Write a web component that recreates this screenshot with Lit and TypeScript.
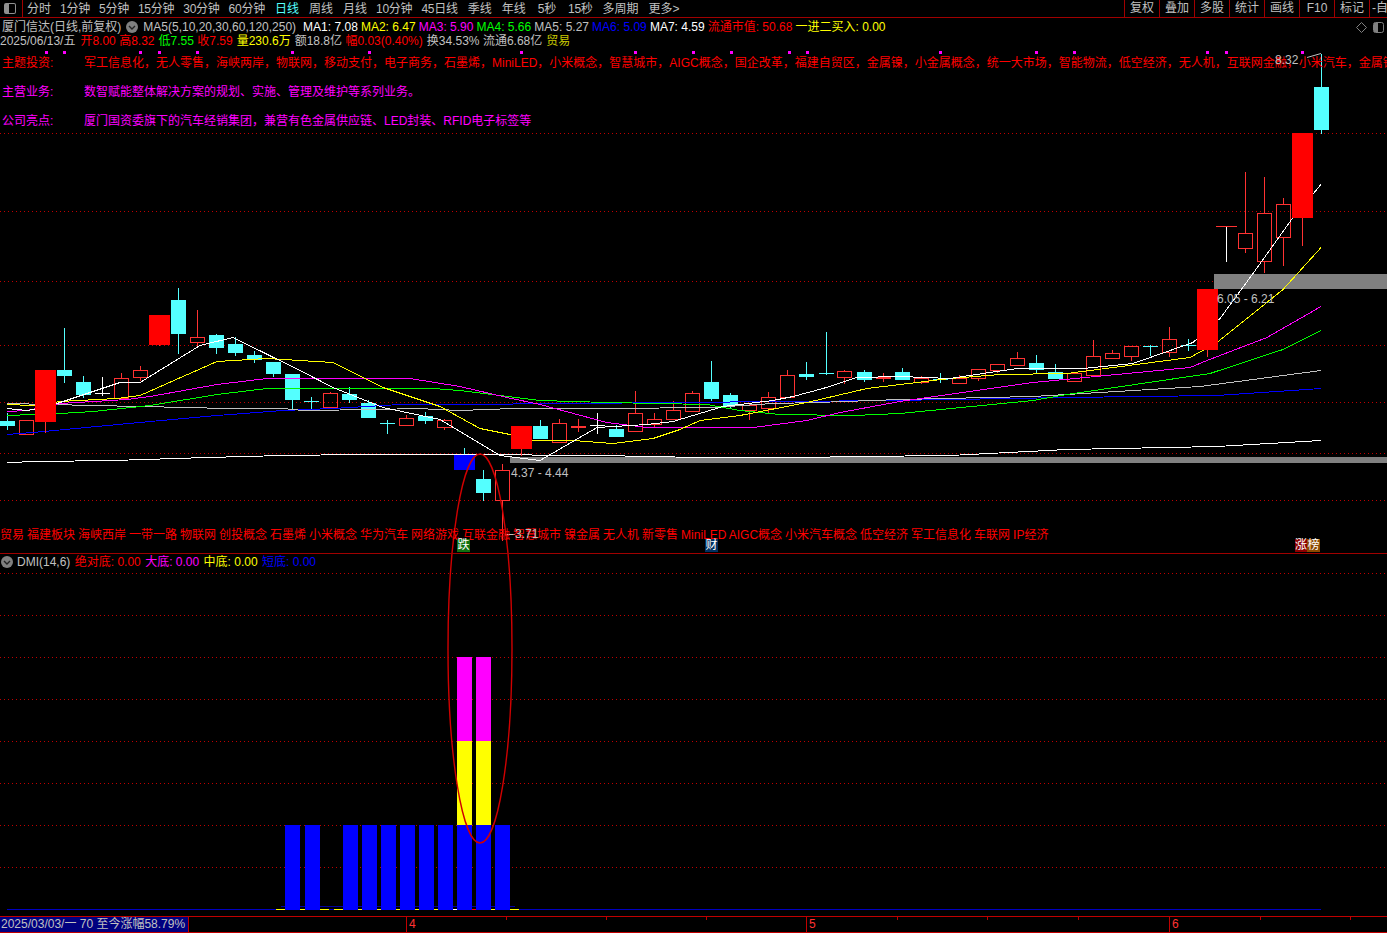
import { LitElement, html, css, svg } from 'lit';
import { customElement } from 'lit/decorators.js';

type Candle = [x: number, kind: 'up' | 'down' | 'fill' | 'blue' | 'doji', top: number, bottom: number, wickTop: number, wickBottom: number, color?: string, wickColor?: string];

const RED = '#ff3232';
const CYAN = '#54ffff';
const COMMA = '\uFF0C';

// x, kind, body top, body bottom, wick top, wick bottom
const CANDLES: Candle[] = [
  [7, 'down', 421, 426, 413, 430],
  [26, 'up', 420, 434, 420, 434],
  [45, 'fill', 370, 422, 370, 433],
  [64, 'down', 370, 376, 328, 383],
  [83, 'down', 382, 395, 376, 398],
  [102, 'doji', 393, 393, 377, 396, '#ffffff'],
  [121, 'up', 378, 398, 373, 398],
  [140, 'up', 370, 377, 366, 381],
  [159, 'fill', 315, 345, 315, 346],
  [178, 'down', 300, 334, 288, 354],
  [197, 'up', 337, 342, 310, 346],
  [216, 'down', 335, 348, 334, 354],
  [235, 'down', 344, 353, 337, 356],
  [254, 'down', 355, 360, 351, 363],
  [273, 'down', 362, 374, 362, 377],
  [292, 'down', 374, 400, 374, 410],
  [311, 'doji', 401, 401, 397, 411, CYAN],
  [330, 'up', 393, 407, 392, 409],
  [349, 'down', 394, 400, 387, 403],
  [368, 'down', 403, 418, 400, 418],
  [387, 'doji', 423, 423, 420, 434, CYAN],
  [406, 'up', 418, 425, 415, 425],
  [425, 'down', 416, 421, 412, 424],
  [444, 'up', 420, 427, 419, 430],
  [464, 'blue', 454, 470, 448, 470],
  [483, 'down', 479, 493, 470, 501],
  [502, 'up', 470, 500, 464, 541],
  [521, 'fill', 426, 449, 426, 456],
  [540, 'down', 426, 439, 420, 439],
  [559, 'up', 423, 442, 419, 442],
  [578, 'doji', 426, 426, 419, 432, RED],
  [597, 'doji', 425, 425, 413, 434, '#ffffff'],
  [616, 'down', 429, 437, 425, 437],
  [635, 'up', 413, 431, 391, 431],
  [654, 'up', 419, 424, 413, 427],
  [673, 'up', 410, 419, 401, 419],
  [692, 'up', 393, 411, 391, 411],
  [711, 'down', 382, 399, 361, 401],
  [730, 'down', 395, 406, 393, 409],
  [749, 'up', 405, 410, 403, 420],
  [768, 'up', 397, 408, 392, 413],
  [787, 'up', 375, 397, 370, 397],
  [806, 'down', 374, 377, 362, 380],
  [826, 'doji', 373, 373, 332, 375, CYAN],
  [844, 'up', 371, 377, 370, 384],
  [864, 'down', 372, 380, 370, 382],
  [883, 'doji', 377, 377, 373, 382, RED],
  [902, 'down', 372, 380, 368, 380],
  [921, 'up', 378, 382, 376, 384],
  [940, 'doji', 379, 379, 373, 383, CYAN],
  [959, 'up', 378, 383, 375, 383],
  [978, 'up', 369, 378, 369, 381],
  [997, 'up', 364, 370, 364, 373],
  [1017, 'up', 358, 365, 352, 365],
  [1036, 'down', 363, 370, 355, 373],
  [1055, 'down', 372, 379, 364, 379],
  [1074, 'up', 373, 381, 373, 381],
  [1093, 'up', 356, 375, 340, 375],
  [1112, 'up', 353, 358, 350, 358],
  [1131, 'up', 346, 356, 346, 361],
  [1150, 'doji', 346, 346, 345, 356, CYAN],
  [1169, 'up', 339, 352, 327, 357],
  [1188, 'doji', 345, 345, 339, 351, CYAN],
  [1207, 'fill', 289, 350, 289, 357],
  [1226, 'doji', 226, 226, 226, 262, RED, '#ffffff'],
  [1245, 'up', 233, 248, 172, 253],
  [1264, 'up', 213, 261, 177, 273],
  [1283, 'up', 204, 237, 198, 266],
  [1302, 'fill', 133, 218, 133, 246],
  [1321, 'down', 87, 130, 54, 134],
];

const MA_LINES: { color: string; points: number[][] }[] = [
  { color: '#ffffff', points: [[7, 462], [37, 461], [113, 460], [207, 457], [283, 455], [360, 454], [460, 454], [600, 455], [700, 457], [800, 457], [860, 456], [950, 455], [1067, 449], [1217, 446], [1321, 440]] },
  { color: '#0000ff', points: [[7, 434], [33, 432], [150, 421], [217, 415], [283, 410], [333, 408], [400, 404], [460, 404], [893, 400], [1067, 397], [1217, 395], [1321, 388]] },
  { color: '#c0c0c0', points: [[7, 403], [93, 405], [187, 407], [227, 408], [283, 408], [303, 410], [377, 409], [417, 408], [460, 410], [513, 408], [607, 408], [713, 407], [773, 403], [817, 402], [900, 399], [1033, 396], [1200, 386], [1321, 370]] },
  { color: '#00ff00', points: [[7, 415], [60, 413], [93, 411], [150, 405], [217, 394], [267, 388], [433, 388], [460, 390], [540, 400], [607, 402], [707, 404], [740, 410], [780, 414], [853, 415], [900, 413], [1033, 400], [1067, 394], [1210, 373], [1283, 349], [1321, 330]] },
  { color: '#ff00ff', points: [[7, 411], [27, 410], [60, 403], [127, 399], [150, 396], [217, 384], [267, 378], [410, 378], [460, 386], [507, 397], [540, 404], [607, 422], [647, 427], [753, 427], [807, 420], [840, 412], [900, 401], [1033, 382], [1190, 367], [1207, 360], [1267, 337], [1321, 306]] },
  { color: '#ffff00', points: [[7, 404], [33, 405], [60, 401], [117, 398], [140, 395], [217, 361], [267, 358], [333, 362], [383, 387], [440, 406], [480, 428], [510, 434], [533, 440], [573, 440], [613, 443], [653, 438], [680, 429], [700, 420], [740, 415], [807, 402], [867, 388], [950, 378], [1000, 374], [1067, 373], [1190, 357], [1217, 342], [1283, 289], [1321, 247]] },
  { color: '#ffffff', points: [[7, 408], [27, 410], [33, 409], [57, 403], [120, 382], [140, 382], [200, 345], [233, 337], [300, 370], [333, 387], [383, 407], [440, 419], [480, 443], [500, 455], [540, 460], [597, 427], [647, 424], [673, 421], [723, 406], [773, 400], [793, 396], [823, 388], [857, 377], [900, 376], [950, 378], [983, 373], [1017, 368], [1083, 368], [1133, 363], [1193, 342], [1220, 318], [1253, 273], [1293, 217], [1321, 184]] },
];

const MAIN_GRID = [133, 211, 281, 345, 402, 453, 500];
const SUB_GRID = [573, 615, 657, 699, 741, 783, 825, 867];
const BLUE_BARS = [285, 305, 343, 362, 381, 400, 419, 438, 457, 476, 495];
// little stubs in the gaps between the blue bars
const STUBS: [number, number, string][] = [
  [276, 9, '#ffff00'], [300, 5, '#ffff00'], [320, 9, '#ffff00'], [334, 9, '#ffff00'],
  [358, 4, '#ffff00'], [377, 4, '#ffff00'], [396, 4, '#ffff00'], [415, 4, '#ffff00'],
  [434, 4, '#ffff00'], [453, 4, '#ffffff'], [472, 4, '#ff0000'], [491, 4, '#ffff00'], [510, 9, '#ffff00'],
];
const FOOT_TICKS = [506, 606, 706, 897, 987, 1078, 1260, 1350];

const LEFT_TABS = [
  '分时', '1分钟', '5分钟', '15分钟', '30分钟', '60分钟', '日线', '周线', '月线', '10分钟', '45日线', '季线', '年线', '5秒', '15秒', '多周期', '更多>',
];
const RIGHT_TABS = ['复权', '叠加', '多股', '统计', '画线', 'F10', '标记', '-自'];

const MA_LEGEND: [string, string][] = [
  ['MA1: 7.08', 'white'],
  ['MA2: 6.47', 'yellow'],
  ['MA3: 5.90', 'magenta'],
  ['MA4: 5.66', 'green'],
  ['MA5: 5.27', 'grey'],
  ['MA6: 5.09', 'blue'],
  ['MA7: 4.59', 'white'],
  ['流通市值: 50.68', 'red'],
  ['一进二买入: 0.00', 'yellow'],
];

const THEMES = [
  '军工信息化', '无人零售', '海峡两岸', '物联网', '移动支付', '电子商务', '石墨烯', 'MiniLED', '小米概念', '智慧城市', 'AIGC概念',
  '国企改革', '福建自贸区', '金属镍', '小金属概念', '统一大市场', '智能物流', '低空经济', '无人机', '互联网金融', '小米汽车', '金属镍',
];
const THEME_DOTS = [45, 63, 139, 158, 196, 291, 368, 520, 634, 692, 730, 788, 806, 939, 1035, 1073, 1206, 1225, 1301];

const chevron = html`<svg class="round" width="12" height="12" viewBox="0 0 12 12">
  <circle cx="6" cy="6" r="6" fill="#808080"></circle>
  <path d="M3 5l3 3 3-3" fill="none" stroke="#222" stroke-width="1.4"></path>
</svg>`;

@customElement('app-root')
export class AppRoot extends LitElement {
  static styles = css`
    :host {
      display: block;
      width: 1387px;
      height: 933px;
      background: #000;
      color: #c0c0c0;
      font: 12px 'Liberation Sans', 'Noto Sans CJK SC', sans-serif;
      overflow: hidden;
    }
    .toolbar {
      height: 17px;
      display: flex;
      justify-content: space-between;
      border-bottom: 1px solid #a00000;
      line-height: 16px;
      box-sizing: content-box;
    }
    .tabs {
      display: flex;
      align-items: center;
      white-space: nowrap;
    }
    .logo {
      width: 23px;
      height: 17px;
      border-right: 1px solid #a00000;
      box-sizing: border-box;
      display: flex;
      align-items: center;
      padding-left: 4px;
      margin-right: 4px;
    }
    .logo i {
      width: 12px;
      height: 11px;
      box-sizing: border-box;
      border: 1px solid #909090;
      border-left-width: 5px;
      border-radius: 2px;
    }
    .tab {
      margin-left: 9px;
      letter-spacing: -0.25px;
    }
    .tab.cjk {
      margin-left: 10px;
      letter-spacing: 0;
    }
    .tab.lead {
      margin-left: 0;
    }
    .tab.active {
      color: #54ffff;
    }
    .tab.wide {
      margin-left: 12px;
    }
    .right .cell {
      width: 35px;
      height: 17px;
      box-sizing: border-box;
      border-left: 1px solid #a00000;
      text-align: center;
    }
    .right .cell:last-child {
      width: 18px;
      text-align: left;
      padding-left: 2px;
      overflow: hidden;
    }
    .main {
      position: relative;
      height: 535px;
      border-bottom: 1px solid #a00000;
      overflow: hidden;
    }
    .sub {
      position: relative;
      height: 362px;
      overflow: hidden;
    }
    .chart {
      position: absolute;
      left: 0;
      display: block;
    }
    .main .chart {
      top: -18px;
    }
    .sub .chart {
      top: -554px;
    }
    .head {
      position: relative;
      padding: 2px 0 0 2px;
    }
    .line {
      display: flex;
      align-items: center;
      height: 14px;
      white-space: nowrap;
      line-height: 14px;
    }
    .line.stats {
      margin-left: -2px;
    }
    .line.stats .first {
      margin-right: 5px;
    }
    .line.stats .tight {
      margin-right: 3.4px;
    }
    .line .title {
      margin-right: 5px;
    }
    .line .round {
      margin-right: 4px;
      flex: none;
    }
    .line .ma {
      margin-right: 3.1px;
    }
    .line .ma.formula {
      margin-left: 1px;
      margin-right: 7px;
    }
    .diamond {
      position: absolute;
      top: 4px;
      right: 3px;
      display: flex;
      gap: 6px;
      align-items: center;
    }
    .line span {
      margin-right: 4px;
    }
    .line span:last-child {
      margin-right: 0;
    }
    .white { color: #fff; }
    .yellow { color: #ffff00; }
    .magenta { color: #ff00ff; }
    .green { color: #00ff00; }
    .grey { color: #c0c0c0; }
    .blue { color: #0000ff; }
    .red { color: #ff0000; }
    .gold { color: #c8c800; }
    .themes {
      position: relative;
      margin-top: 8px;
      display: grid;
      grid-template-columns: 82px auto;
      grid-auto-rows: 29px;
      white-space: nowrap;
      line-height: 14px;
      padding-left: 2px;
    }
    .theme-dot {
      position: absolute;
      top: -5px;
      width: 3px;
      height: 3px;
      background: #ff00ff;
    }
    .concepts {
      position: absolute;
      left: 0;
      bottom: 11px;
      white-space: nowrap;
      color: #ff0000;
      word-spacing: -0.33px;
    }
    .marker {
      position: absolute;
      bottom: 1px;
      width: 13px;
      height: 13px;
      line-height: 13px;
      font-size: 12px;
      text-align: center;
      color: #fff;
    }
    .fall { left: 457px; background: #107010; }
    .fin { left: 705px; background: #003060; }
    .up1 { left: 1295px; width: 12px; background: #8b0000; }
    .up2 { left: 1307px; background: #8b4a00; }
    .price {
      position: absolute;
      color: #c0c0c0;
      white-space: nowrap;
      line-height: 14px;
    }
    .p-low { left: 511px; top: 448px; }
    .p-mid { left: 1217px; top: 274px; }
    .p-high { left: 1275px; top: 35px; }
    .p-min { left: 515px; top: 509px; }
    .sub-head {
      position: relative;
      padding: 1px 0 0 1px;
    }
    .sub-head span {
      margin-right: 4.4px;
    }
    .footer {
      position: relative;
      height: 15px;
      border-top: 1px solid #c00000;
      border-bottom: 1px solid #c00000;
      display: flex;
      line-height: 15px;
      color: #ff3232;
    }
    .range {
      width: 189px;
      height: 15px;
      box-sizing: border-box;
      background: #000080;
      border-right: 1px solid #c00000;
      color: #c0c0c0;
      padding-left: 1px;
      white-space: nowrap;
      overflow: hidden;
    }
    .month {
      position: absolute;
      top: 0;
      height: 15px;
      padding-left: 2px;
      border-left: 1px solid #c00000;
    }
    .tick {
      position: absolute;
      top: 0;
      width: 1px;
      height: 3px;
      background: #c00000;
    }
  `;

  private grid(rows: number[]) {
    return rows.map(
      (y) => svg`<line x1="0" x2="1387" y1=${y + 0.5} y2=${y + 0.5} stroke="#c00000" stroke-dasharray="1 3" shape-rendering="crispEdges"></line>`,
    );
  }

  private candle([x, kind, top, bottom, wickTop, wickBottom, color, wickColor]: Candle) {
    const cx = x + 0.5;
    if (kind === 'doji') {
      const wide = x > 1200;
      return svg`
        <line x1=${cx} x2=${cx} y1=${wickTop} y2=${wickBottom} stroke=${wickColor ?? color ?? RED}></line>
        <rect x=${wide ? x - 10 : x - 7} y=${top} width=${wide ? 21 : 15} height=${color === RED && !wide ? 2 : 1} fill=${color ?? RED}></rect>`;
    }
    if (kind === 'up') {
      return svg`
        <line x1=${cx} x2=${cx} y1=${wickTop} y2=${top} stroke=${RED}></line>
        <line x1=${cx} x2=${cx} y1=${bottom} y2=${wickBottom} stroke=${RED}></line>
        <rect x=${x - 6.5} y=${top + 0.5} width="14" height=${bottom - top} fill="none" stroke=${RED}></rect>`;
    }
    if (kind === 'fill') {
      return svg`
        <line x1=${cx} x2=${cx} y1=${wickTop} y2=${wickBottom} stroke=${RED}></line>
        <rect x=${x - 10} y=${top} width="21" height=${bottom - top} fill="#ff0000"></rect>`;
    }
    const blue = kind === 'blue';
    return svg`
      <line x1=${cx} x2=${cx} y1=${wickTop} y2=${wickBottom} stroke=${CYAN}></line>
      <rect x=${x - (blue ? 10 : 7)} y=${top} width=${blue ? 21 : 15} height=${bottom - top} fill=${blue ? '#0000ff' : CYAN}></rect>`;
  }

  private mainChart() {
    // cyan bodies sit under the moving averages, solid red ones on top of them
    const under = CANDLES.filter((c) => c[1] !== 'fill');
    const over = CANDLES.filter((c) => c[1] === 'fill');
    return html`<svg class="chart" width="1387" height="553" viewBox="0 0 1387 553">
      ${this.grid(MAIN_GRID)}
      <rect x="1214" y="274" width="173" height="15" fill="#808080"></rect>
      <rect x="510" y="457" width="877" height="6" fill="#808080"></rect>
      ${under.map((c) => this.candle(c))}
      ${MA_LINES.map(
        (l) => svg`<polyline points=${l.points.map(([x, y]) => `${x},${y + 0.5}`).join(' ')} fill="none" stroke=${l.color} stroke-width="1" shape-rendering="crispEdges"></polyline>`,
      )}
      ${over.map((c) => this.candle(c))}
      <path d="M1307 57.5L1321 53.5M505 534.5H515" fill="none" stroke="#c0c0c0"></path>
      <ellipse cx="480" cy="648.5" rx="32" ry="194.5" fill="none" stroke="#d00000" stroke-width="1.4"></ellipse>
    </svg>`;
  }

  private subChart() {
    return html`<svg class="chart" width="1387" height="916" viewBox="0 0 1387 916">
      ${this.grid(SUB_GRID)}
      <line x1="7" x2="1321" y1="909.5" y2="909.5" stroke="#0000c0"></line>
      <line x1="281" x2="515" y1="906.5" y2="906.5" stroke="#0000a0"></line>
      ${STUBS.map(([x, w, c]) => svg`<rect x=${x} y="909" width=${w} height="1" fill=${c}></rect>`)}
      ${BLUE_BARS.map((x) => svg`<rect x=${x} y="825" width="15" height="85" fill="#0000ff"></rect>`)}
      ${[457, 476].map((x) => svg`
        <rect x=${x} y="657" width="15" height="84" fill="#ff00ff"></rect>
        <rect x=${x} y="741" width="15" height="84" fill="#ffff00"></rect>
      `)}
      <ellipse cx="480" cy="648.5" rx="32" ry="194.5" fill="none" stroke="#d00000" stroke-width="1.4"></ellipse>
    </svg>`;
  }

  private tabClass(t: string) {
    const cls = ['tab'];
    if (t === '分时') cls.push('lead');
    if (t === '日线') cls.push('active');
    if (t === '5秒' || t === '15秒') cls.push('wide');
    else if (!/\d/.test(t)) cls.push('cjk');
    return cls.join(' ');
  }

  render() {
    return html`
      <div class="toolbar">
        <div class="tabs">
          <div class="logo"><i></i></div>
          ${LEFT_TABS.map((t) => html`<span class=${this.tabClass(t)}>${t}</span>`)}
        </div>
        <div class="tabs right">
          ${RIGHT_TABS.map((t) => html`<div class="cell">${t}</div>`)}
        </div>
      </div>
      <div class="main">
        ${this.mainChart()}
        <div class="head">
          <div class="line">
            <span class="title">厦门信达(日线,前复权)</span>
            ${chevron}
            <span class="ma formula">MA5(5,10,20,30,60,120,250)</span>
            ${MA_LEGEND.map(([t, c]) => html`<span class="ma ${c}">${t}</span>`)}
          </div>
          <div class="line stats">
            <span class="first">2025/06/13/五</span>
            <span class="red tight">开8.00</span>
            <span class="red">高8.32</span>
            <span class="green tight">低7.55</span>
            <span class="red">收7.59</span>
            <span class="yellow">量230.6万</span>
            <span class="tight">额18.8亿</span>
            <span class="red">幅0.03(0.40%)</span>
            <span class="tight">换34.53%</span>
            <span>流通6.68亿</span>
            <span class="gold">贸易</span>
          </div>
          <div class="diamond">
            <svg width="11" height="11" viewBox="0 0 11 11"><path d="M5.5 .5l5 5-5 5-5-5z" fill="none" stroke="#808080"></path></svg>
            <svg width="11" height="11" viewBox="0 0 11 11"><rect x=".5" y=".5" width="10" height="10" rx="2" fill="none" stroke="#808080"></rect><rect x="1" y="1" width="4" height="9" fill="#808080"></rect></svg>
          </div>
        </div>
        <div class="themes">
          ${THEME_DOTS.map((x) => html`<i class="theme-dot" style="left:${x}px"></i>`)}
          <div class="red">主题投资:</div>
          <div class="red">${THEMES.join(COMMA)}</div>
          <div class="magenta">主营业务:</div>
          <div class="magenta">数智赋能整体解决方案的规划、实施、管理及维护等系列业务。</div>
          <div class="magenta">公司亮点:</div>
          <div class="magenta">${`厦门国资委旗下的汽车经销集团${COMMA}兼营有色金属供应链、LED封装、RFID电子标签等`}</div>
        </div>
        <div class="price p-low">4.37 - 4.44</div>
        <div class="price p-mid">6.05 - 6.21</div>
        <div class="price p-high">8.32</div>
        <div class="concepts">贸易 福建板块 海峡西岸 一带一路 物联网 创投概念 石墨烯 小米概念 华为汽车 网络游戏 互联金融 智慧城市 镍金属 无人机 新零售 MiniLED AIGC概念 小米汽车概念 低空经济 军工信息化 车联网 IP经济</div>
        <div class="price p-min">3.71</div>
        <div class="marker fall">跌</div>
        <div class="marker fin">财</div>
        <div class="marker up1">涨</div>
        <div class="marker up2">榜</div>
      </div>
      <div class="sub">
        ${this.subChart()}
        <div class="sub-head">
          <div class="line">
            ${chevron}
            <span>DMI(14,6)</span>
            <span class="red">绝对底: 0.00</span>
            <span class="magenta">大底: 0.00</span>
            <span class="yellow">中底: 0.00</span>
            <span class="blue">短底: 0.00</span>
          </div>
        </div>
      </div>
      <div class="footer">
        <div class="range">2025/03/03/一 70 至今涨幅58.79%</div>
        ${FOOT_TICKS.map((x) => html`<i class="tick" style="left:${x}px"></i>`)}
        <div class="month" style="left:406px">4</div>
        <div class="month" style="left:806px">5</div>
        <div class="month" style="left:1169px">6</div>
      </div>
    `;
  }
}

declare global {
  interface HTMLElementTagNameMap {
    'app-root': AppRoot;
  }
}
